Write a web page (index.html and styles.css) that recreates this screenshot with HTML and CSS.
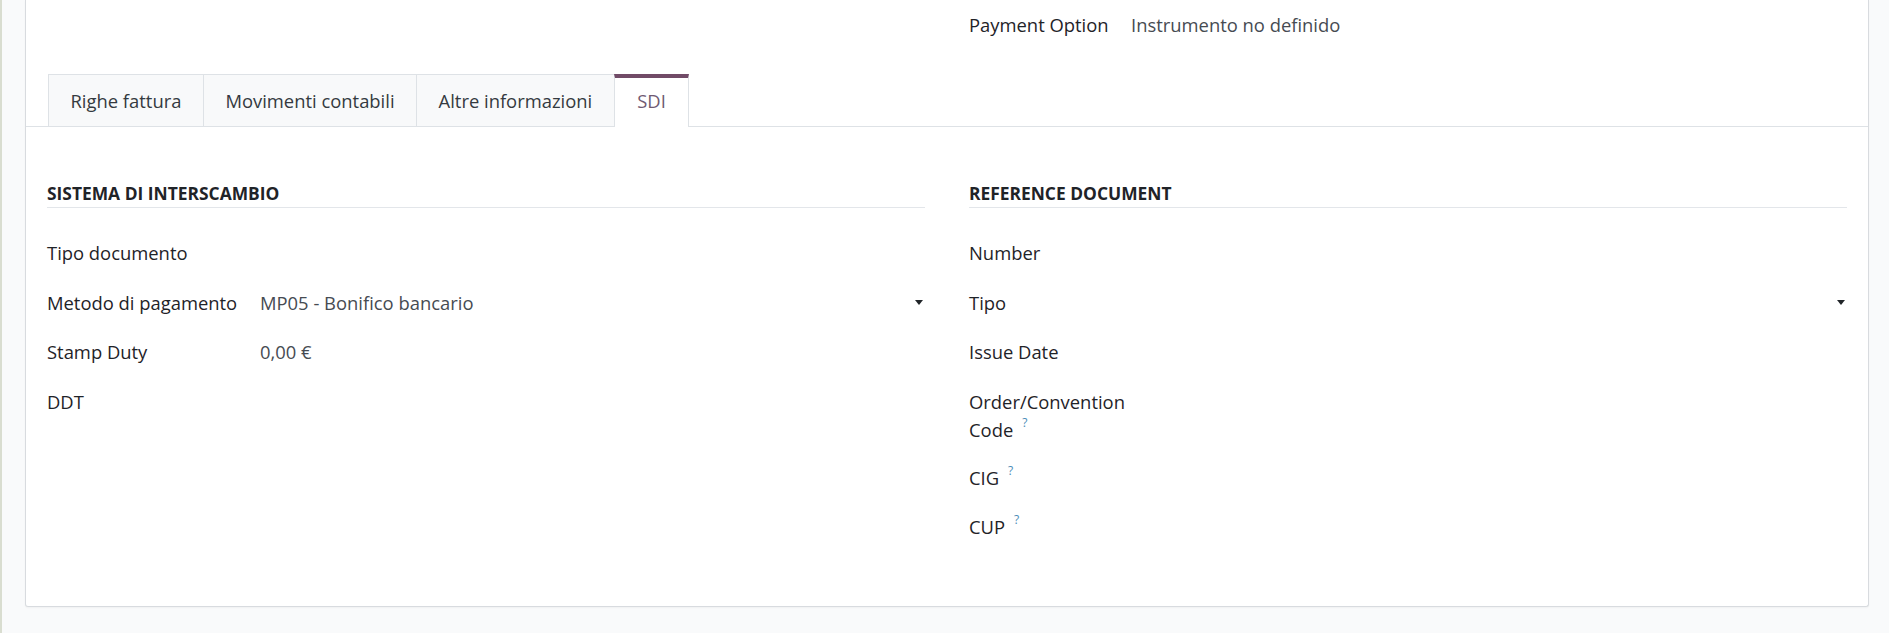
FILE: index.html
```html
<!DOCTYPE html>
<html lang="it">
<head>
<meta charset="utf-8">
<title>Fattura - SDI</title>
<link rel="stylesheet" href="styles.css">
</head>
<body>
<div class="page">
  <div class="sheet">
    <div class="top-groups">
      <div class="group"></div>
      <div class="group">
        <div class="pair top-pair">
          <span class="label">Payment Option</span>
          <span class="value">Instrumento no definido</span>
        </div>
      </div>
    </div>

    <div class="notebook">
      <ul class="tabs">
        <li class="tab">Righe fattura</li>
        <li class="tab">Movimenti contabili</li>
        <li class="tab">Altre informazioni</li>
        <li class="tab active">SDI</li>
      </ul>
      <div class="pane">
        <div class="group">
          <div class="separator">SISTEMA DI INTERSCAMBIO</div>
          <div class="fields">
            <span class="label">Tipo documento</span><span class="value"></span>
            <span class="label">Metodo di pagamento</span><span class="value select">MP05 - Bonifico bancario<i class="caret"></i></span>
            <span class="label">Stamp Duty</span><span class="value">0,00 €</span>
            <span class="label">DDT</span><span class="value"></span>
          </div>
        </div>
        <div class="group">
          <div class="separator">REFERENCE DOCUMENT</div>
          <div class="fields right">
            <span class="label">Number</span><span class="value"></span>
            <span class="label">Tipo</span><span class="value select"><i class="caret"></i></span>
            <span class="label">Issue Date</span><span class="value"></span>
            <span class="label multi"><span class="line">Order/Convention</span><span class="line">Code<sup class="help">?</sup></span></span><span class="value multi"></span>
            <span class="label">CIG<sup class="help">?</sup></span><span class="value"></span>
            <span class="label">CUP<sup class="help">?</sup></span><span class="value"></span>
          </div>
        </div>
      </div>
    </div>
  </div>
</div>
</body>
</html>
```

FILE: styles.css
```css
* { box-sizing: border-box; }

html, body {
  margin: 0;
  padding: 0;
  background: #f9fafb;
}

body {
  font-family: "Open Sans", "Noto Sans", sans-serif;
  font-size: 18.4px;
  color: #212529;
  overflow: hidden;
}

.page {
  height: 633px;
  border-left: 2px solid #d9ddd0;
  padding: 0 20px 0 23px;
  background: #f9fafb;
}

.sheet {
  height: 607px;
  background: #ffffff;
  border: 1px solid #d8dbdf;
  border-top: none;
  border-radius: 0 0 3px 3px;
  box-shadow: 0 1px 2px rgba(0, 0, 0, 0.04);
  padding: 0 21px;
}

.top-groups {
  display: grid;
  grid-template-columns: 1fr 1fr;
  column-gap: 44px;
  padding-top: 11px;
}

.pair {
  display: grid;
  grid-template-columns: 162px 1fr;
  line-height: 28px;
}

.label {
  font-weight: 500;
  color: #1f2328;
}

.line {
  display: block;
}

.multi {
  margin-bottom: -2px;
}

.value {
  color: #464b52;
}

.notebook {
  margin-top: 35px;
}

.tabs {
  display: flex;
  list-style: none;
  margin: 0 -21px;
  padding: 0 0 0 22px;
  border-bottom: 1px solid #dee2e6;
}

.tab {
  padding: 11px 21.5px;
  line-height: 29px;
  background: #f8f9fa;
  border: 1px solid #dee2e6;
  border-bottom: none;
  margin-left: -1px;
  color: #343a40;
}

.tab:first-child {
  margin-left: 0;
}

.tab.active {
  background: #ffffff;
  color: #6f5a72;
  border-top: 4px solid #714b67;
  padding: 8px 22.5px 12px;
  margin-bottom: -1px;
}

.pane {
  display: grid;
  grid-template-columns: 1fr 1fr;
  column-gap: 44px;
  padding-top: 53px;
}

.separator {
  font-size: 17.4px;
  font-weight: 700;
  line-height: 27px;
  color: #1f2328;
  border-bottom: 1px solid #e3e6ea;
  margin-bottom: 31px;
}

.fields {
  display: grid;
  grid-template-columns: 213px 1fr;
  row-gap: 21.7px;
  line-height: 28px;
}

.fields.right {
  grid-template-columns: 180px 1fr;
}

.select {
  display: flex;
  align-items: center;
}

.caret {
  display: block;
  width: 0;
  height: 0;
  margin-left: auto;
  margin-right: 2px;
  border-top: 5px solid #212529;
  border-left: 4px solid transparent;
  border-right: 4px solid transparent;
}

.help {
  color: #4b8db8;
  font-size: 12px;
  font-weight: 400;
  margin-left: 9px;
  vertical-align: top;
  line-height: 14px;
}
```
